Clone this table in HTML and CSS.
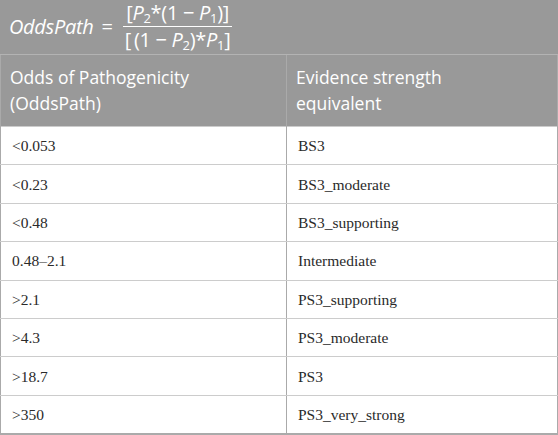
FILE: index.html
```html
<!DOCTYPE html>
<html>
<head>
<meta charset="utf-8">
<link rel="stylesheet" href="styles.css">
</head>
<body>
<div class="wrap">
  <div class="formula">
    <span class="lhs"><i>OddsPath</i></span>
    <span class="eq">=</span>
    <span class="frac">
      <span class="num">[<i>P</i><sub>2</sub>*(1 − <i>P</i><sub>1</sub>)]</span>
      <span class="den">[&#8201;(1 − <i>P</i><sub>2</sub>)*<i>P</i><sub>1</sub>]</span>
    </span>
  </div>
  <table class="tbl">
    <thead>
      <tr><th>Odds of Pathogenicity<br>(OddsPath)</th><th>Evidence strength<br>equivalent</th></tr>
    </thead>
    <tbody>
      <tr><td>&lt;0.053</td><td>BS3</td></tr>
      <tr><td>&lt;0.23</td><td>BS3_moderate</td></tr>
      <tr><td>&lt;0.48</td><td>BS3_supporting</td></tr>
      <tr><td>0.48–2.1</td><td>Intermediate</td></tr>
      <tr><td>&gt;2.1</td><td>PS3_supporting</td></tr>
      <tr><td>&gt;4.3</td><td>PS3_moderate</td></tr>
      <tr><td>&gt;18.7</td><td>PS3</td></tr>
      <tr><td>&gt;350</td><td>PS3_very_strong</td></tr>
    </tbody>
  </table>
</div>
</body>
</html>
```
FILE: styles.css
```css
html, body { margin: 0; padding: 0; background: #fff; }
.wrap { width: 558px; }
.formula {
  background: #999999;
  color: #fff;
  font-family: "Open Sans", sans-serif;
  font-size: 20px;
  letter-spacing: -0.3px;
  display: flex;
  align-items: center;
  height: 55px;
  box-sizing: border-box;
  padding-left: 9px;
  padding-bottom: 1px;
  border-bottom: 1px solid #b3b3b3;
}
.formula i { font-style: italic; }
.eq { margin: 0 9px 0 8px; }
.frac { display: inline-flex; flex-direction: column; align-items: center; }
.num { padding: 0 3px 2px; border-bottom: 1px solid #fff; line-height: 22px; }
.den { padding: 2px 3px 0; line-height: 22px; }
sub { font-size: 13px; vertical-align: -3px; line-height: 0; }
.tbl {
  width: 558px;
  border-collapse: collapse;
  table-layout: fixed;
}
.tbl th {
  background: #999999;
  color: #fff;
  font-family: "Open Sans", sans-serif;
  font-weight: normal;
  font-size: 17.5px;
  text-align: left;
  line-height: 26px;
  padding: 9px 8px 10px 9px;
  border-left: 1px solid #aaa;
  border-right: 1px solid #aaa;
  height: 71px;
  box-sizing: border-box;
}
.tbl th:first-child { width: 286px; }
.tbl td {
  font-family: "Liberation Serif", serif;
  font-size: 15.5px;
  color: #2a2a2a;
  height: 38.4px;
  padding: 1px 11px 0;
  border: 1px solid #ccc;
  border-left: 1px solid #aaa;
  border-right: 1px solid #aaa;
  box-sizing: border-box;
}
.tbl td:last-child { border-left-color: #ccc; }
.tbl tr:last-child td { border-bottom: 2px solid #aaa; }
```
